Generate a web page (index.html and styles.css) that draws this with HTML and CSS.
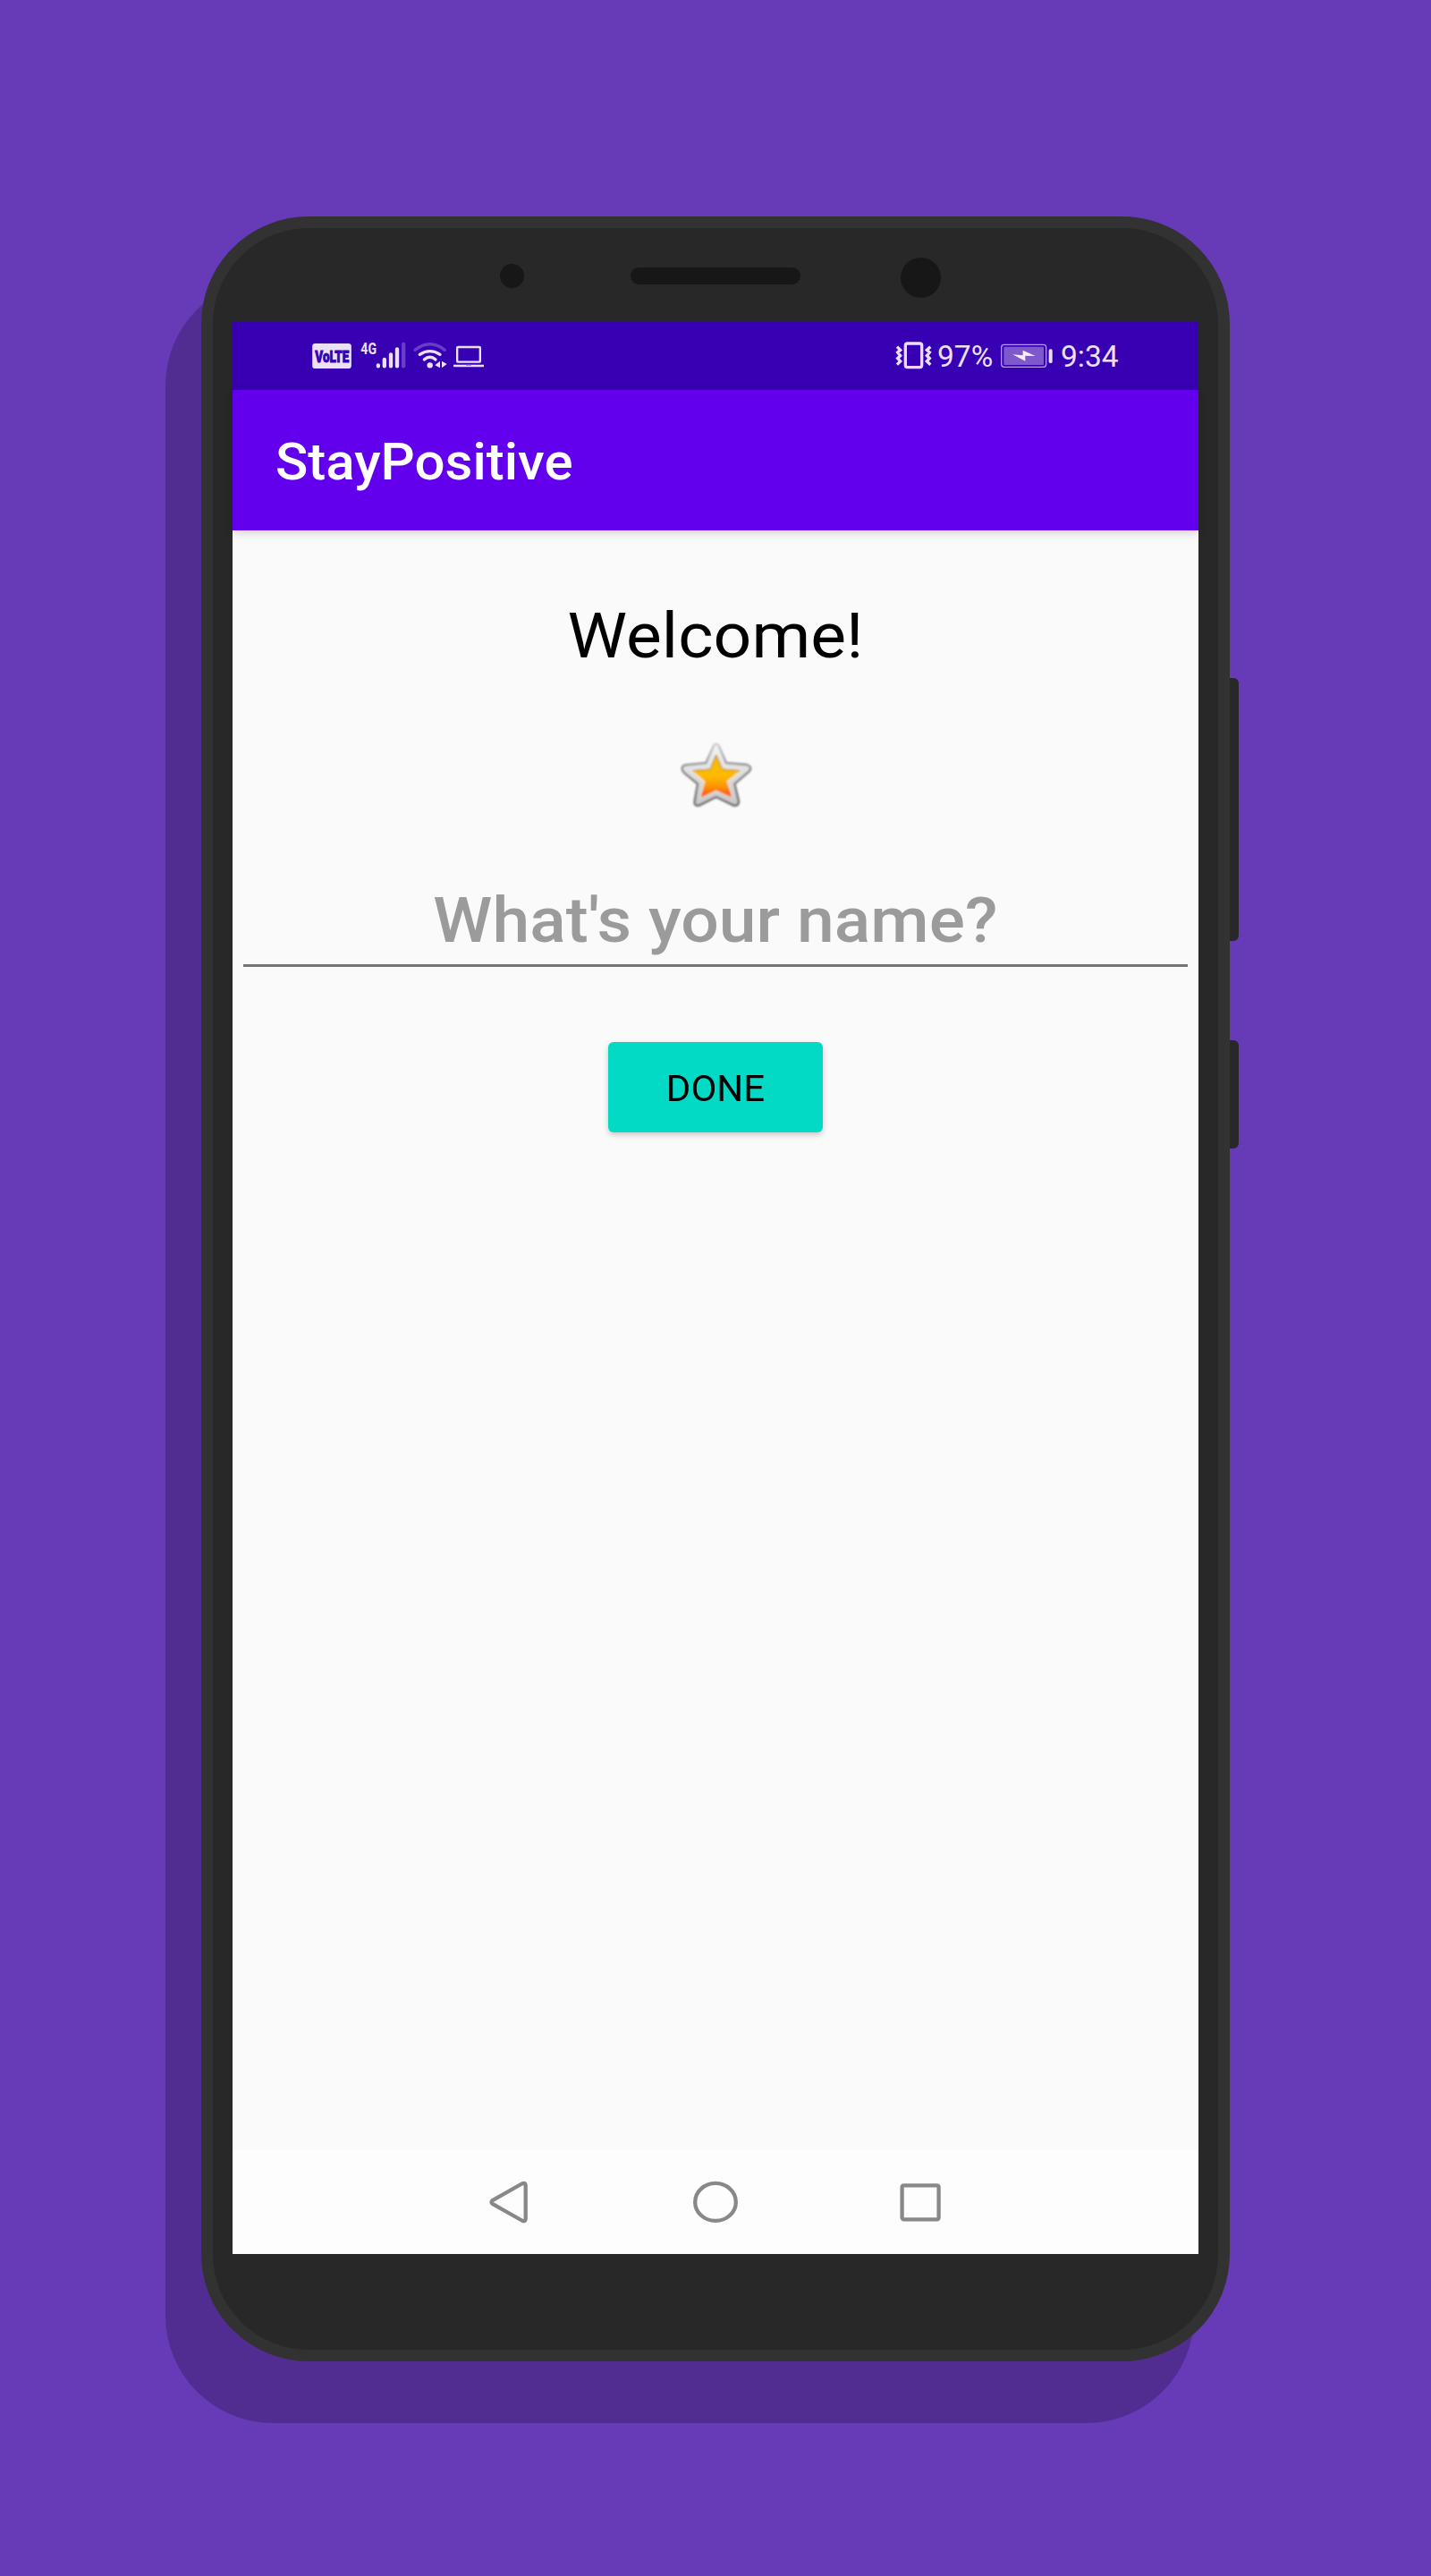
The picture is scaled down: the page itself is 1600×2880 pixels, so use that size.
FILE: index.html
```html
<!DOCTYPE html>
<html lang="en">
<head>
<meta charset="utf-8">
<title>StayPositive</title>
<link rel="stylesheet" href="styles.css">
</head>
<body>
<div class="phone">
  <div class="side-key volume"></div>
  <div class="side-key power"></div>
  <div class="bezel">
    <div class="sensor"></div>
    <div class="speaker"></div>
    <div class="camera"></div>
  </div>
  <div class="screen">
    <div class="status">
      <svg class="ic" width="70" height="76" viewBox="0 0 210 228">
        <rect x="57.500" y="72" width="131" height="84" rx="10" fill="#ebe0f8"/>
        <text class="volte" transform="translate(67 135) scale(1 1.34)" x="0" y="0" textLength="114" lengthAdjust="spacingAndGlyphs">VoLTE</text>
      </svg>
      <svg class="ic" width="60" height="76" viewBox="210 0 180 228">
        <text class="gen" x="220" y="108" textLength="53" lengthAdjust="spacingAndGlyphs">4G</text>
        <g stroke="#ebe0f8" stroke-width="13" stroke-linecap="round">
          <path d="M278.500 145v3M299.500 126v22M321 109v39M342 91v57"/>
          <path d="M363.500 75v73" stroke="#6a3dc8"/>
        </g>
      </svg>
      <svg class="ic" width="44" height="76" viewBox="390 0 132 228">
        <g fill="none" stroke="#ebe0f8" stroke-linecap="round">
          <path d="M402 94Q452 55 502 94" stroke="#6a3dc8" stroke-width="10"/>
          <path d="M418 109Q452 87 486 109" stroke-width="10"/>
          <path d="M433 126Q452 109 471 126" stroke-width="10"/>
        </g>
        <circle cx="452" cy="145" r="9.500" fill="#ebe0f8"/>
        <path d="M486 131v23l-17-9zM492 131l17 10l-17 13z" fill="#ebe0f8"/>
      </svg>
      <svg class="ic" width="40" height="76" viewBox="522 0 120 228">
        <rect x="543.500" y="84" width="77" height="50" rx="3" fill="none" stroke="#ebe0f8" stroke-width="7"/>
        <path d="M531 147h102" stroke="#ebe0f8" stroke-width="7"/>
        <path d="M573 145h18" stroke="#9b7bd9" stroke-width="3"/>
      </svg>
      <div class="status-right">
        <svg class="ic" width="48" height="76" viewBox="60 0 144 228">
          <rect x="97" y="72" width="55" height="80" rx="7" fill="none" stroke="#ebe0f8" stroke-width="10"/>
          <path d="M69 83l11 11l-9 8l9 11l-9 9l9 10l-11 11M181 83l-12 11l9 8l-9 11l9 9l-9 10l12 11" fill="none" stroke="#ebe0f8" stroke-width="10"/>
        </svg>
        <span class="percent"><span class="text">97%</span></span>
        <svg class="ic" width="70" height="76" viewBox="408 0 210 228">
          <rect x="419" y="76" width="150" height="75" rx="9" fill="none" stroke="#b79ee6" stroke-width="4"/>
          <rect x="427" y="83" width="134" height="61" rx="3" fill="#7f58cc"/>
          <rect x="578" y="91" width="12" height="47" rx="5" fill="#ebe0f8"/>
          <path d="M457 109l34 3v-17l42 19l-34-1v18z" fill="#f7f0fd"/>
        </svg>
        <span class="clock"><span class="text">9:34</span></span>
      </div>
    </div>
    <div class="appbar"><span class="text">StayPositive</span></div>
    <div class="content">
      <div class="welcome"><span class="text">Welcome!</span></div>
      <svg class="star" width="120" height="120" viewBox="0 0 360 360">
        <defs>
          <linearGradient id="rim" x1="0" y1="0" x2="0" y2="1">
            <stop offset="0" stop-color="#c9c9c9"/><stop offset=".4" stop-color="#858585"/><stop offset="1" stop-color="#646464"/>
          </linearGradient>
          <linearGradient id="silver" x1="0" y1="0" x2="0" y2="1">
            <stop offset="0" stop-color="#f4f4f4"/><stop offset="1" stop-color="#c6c6c6"/>
          </linearGradient>
          <linearGradient id="gold" x1="0" y1="0" x2="0" y2="1">
            <stop offset="0" stop-color="#f5bd00"/><stop offset=".5" stop-color="#ffb900"/><stop offset=".75" stop-color="#ff9500"/><stop offset="1" stop-color="#fb4b16"/>
          </linearGradient>
          <filter id="soft" x="-10%" y="-10%" width="120%" height="120%"><feGaussianBlur stdDeviation="2.500"/></filter>
        </defs>
        <g filter="url(#soft)">
          <path d="M174 71Q182 60 191 71L216 129L286 135Q306 143 292 158L244 199L258 258Q258 274 240 271L182 243L126 271Q108 275 110 258L120 199L73 160Q61 143 77 136L148 129Z" fill="url(#silver)" stroke="url(#rim)" stroke-width="7"/>
          <path d="M182 97L205 145L270 152L221 193L238 246L182 224L127 248L141 194L95 152L159 146Z" fill="#f4f4f2"/>
          <path d="M182 102L203 150L262 155L217 190L233 242L182 220L132 243L146 191L103 155L162 150Z" fill="url(#gold)" stroke="url(#gold)" stroke-width="3"/>
          <path d="M103 155L162 150L182 102L203 150L262 155" fill="none" stroke="#a17a20" stroke-width="3"/>
        </g>
      </svg>
      <div class="field"><span class="text">What's your name?</span></div>
      <div class="button"><span class="text">DONE</span></div>
    </div>
    <div class="nav">
      <svg width="560" height="116" viewBox="0 0 560 116">
        <g fill="none" stroke="#888" stroke-width="4.300" stroke-linejoin="round">
          <path d="M67.700 39.500V76.500Q67.700 80.500 63.500 78.500L31 60.200Q28 58 31 55.800L63.500 37.500Q67.700 35.500 67.700 39.500Z"/>
          <ellipse cx="280" cy="57.900" rx="22.800" ry="21"/>
          <rect x="488.600" y="39.300" width="41" height="38" rx="2"/>
        </g>
      </svg>
    </div>
  </div>
</div>
</body>
</html>
```
FILE: styles.css
```css
* { box-sizing: border-box; }
body {
  margin: 0;
  width: 1600px;
  height: 2880px;
  background: #673ab7;
  font-family: Roboto, sans-serif;
  padding: 242px 225px 0;
  overflow: hidden;
}
.phone {
  position: relative;
  width: 1150px;
  height: 2398px;
  background: #282828;
  border: 13px solid #323232;
  border-radius: 120px;
  box-shadow: -40px 69px 0 #522d91;
  padding: 0 22px;
}
.side-key {
  position: absolute;
  left: 1137px;
  width: 10px;
  background: #282828;
  border-radius: 0 6px 6px 0;
}
.volume { top: 503px; height: 294px; }
.power { top: 908px; height: 121px; }
.bezel {
  height: 105px;
  display: flex;
  align-items: flex-start;
  padding: 33px 0 0 299px;
}
.bezel > div { background: #171717; }
.sensor { width: 27px; height: 27px; border-radius: 50%; margin-top: 7px; }
.speaker { width: 190px; height: 19px; border-radius: 9.5px; margin: 11px 112px 0 119px; }
.camera { width: 45px; height: 45px; border-radius: 50%; }
.screen {
  width: 1080px;
  height: 2160px;
  display: flex;
  flex-direction: column;
  background: #fafafa;
}
.text {
  display: inline-block;
  transform: scaleY(.947);
}
.status {
  height: 76px;
  background: #3700b3;
  display: flex;
  padding-left: 70px;
  color: #ebe0f8;
}
.status .text { transform: none; }
.ic { display: block; flex: none; overflow: visible; }
.volte { font: 900 40px Roboto, sans-serif; fill: #3700b3; stroke: #3700b3; stroke-width: 2px; }
.gen { font: 700 56px Roboto, sans-serif; fill: #ebe0f8; }
.status-right {
  display: flex;
  margin-left: auto;
  width: 340px;
  font-size: 33.5px;
  line-height: 77px;
  white-space: nowrap;
}
.percent { width: 68px; }
.appbar {
  height: 157px;
  background: #6200ee;
  color: #fff;
  padding-left: 48px;
  line-height: 162px;
  font-size: 60px;
  font-weight: 500;
  box-shadow: 0 3px 10px rgba(0, 0, 0, .16);
}
.content {
  flex: 1;
  display: flex;
  flex-direction: column;
  align-items: center;
}
.welcome {
  margin-top: 67px;
  font-size: 75px;
  letter-spacing: .1px;
  line-height: 100px;
  color: #000;
}
.star { display: block; margin-top: 50px; }
.field {
  width: 1056px;
  height: 121px;
  margin-top: 30px;
  border-bottom: 3px solid #747474;
  color: #9b9b9b;
  font-size: 75px;
  letter-spacing: .1px;
  font-weight: 500;
  line-height: 136px;
  text-align: center;
}
.button {
  margin-top: 84px;
  width: 240px;
  height: 101px;
  background: #03dac6;
  border-radius: 6px;
  box-shadow: 0 3px 6px rgba(0, 0, 0, .2);
  color: #000;
  font-size: 42px;
  line-height: 106px;
  text-align: center;
}
.nav {
  height: 116px;
  background: #fdfdfd;
  display: flex;
  justify-content: center;
}
```
